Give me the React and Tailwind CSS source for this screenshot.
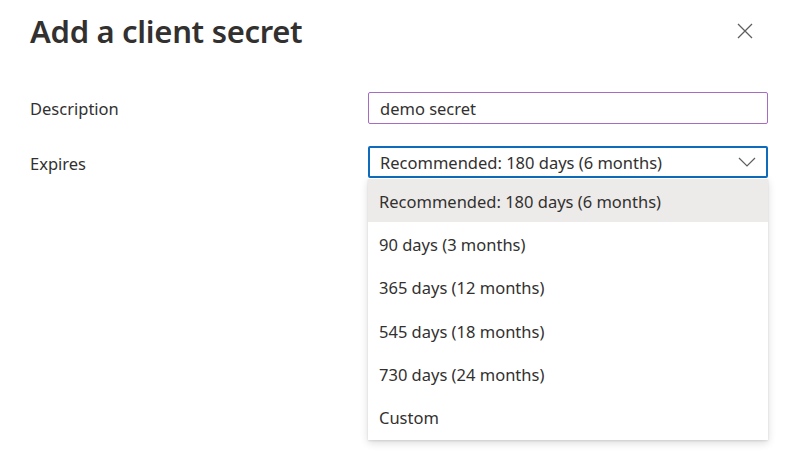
import React from 'react'

const options = [
  'Recommended: 180 days (6 months)',
  '90 days (3 months)',
  '365 days (12 months)',
  '545 days (18 months)',
  '730 days (24 months)',
  'Custom',
]

const App = () => {
  return (
    <div className="w-[801px] h-[469px] bg-white text-[#323130] font-['Noto_Sans',sans-serif] overflow-hidden">
      <div className="px-[30px] pt-[11px]">
        <div className="flex items-center justify-between">
          <h1 className="text-[31px] leading-[40px] font-semibold tracking-[-0.3px]">Add a client secret</h1>
          <button className="w-6 h-6 mr-[14px] flex items-center justify-center text-[#605e5c]">
            <svg width="16" height="16" viewBox="0 0 16 16" fill="none" stroke="currentColor" strokeWidth="1.3">
              <path d="M1 1 L15 15 M15 1 L1 15" />
            </svg>
          </button>
        </div>

        <div className="mt-[41px] flex items-center">
          <label className="w-[338px] text-[16.5px] pt-[3px]">Description</label>
          <div className="w-[400px] h-8 border border-[#a56cc1] rounded-[2px] px-[11px] pt-[3px] flex items-center text-[16.5px]">
            demo secret
          </div>
        </div>

        <div className="mt-[22px] flex items-start">
          <label className="w-[338px] text-[16.5px] leading-8 pt-[2px]">Expires</label>
          <div className="relative w-[400px]">
            <div className="h-8 border-2 border-[#0f6cbd] rounded-[2px] pl-[10px] pr-[10px] flex items-center justify-between text-[16.5px]">
              <span className="pt-[3px]">Recommended: 180 days (6 months)</span>
              <svg width="18" height="10" viewBox="0 0 18 10" fill="none" stroke="#605e5c" strokeWidth="1.2">
                <path d="M1 1 L9 9 L17 1" />
              </svg>
            </div>
            <ul className="absolute left-0 top-8 w-[400px] bg-white py-[1px] shadow-[0_3px_8px_rgba(0,0,0,0.14),0_1px_2px_rgba(0,0,0,0.1)]">
              {options.map((o, i) => (
                <li
                  key={o}
                  className={`h-[43.3px] flex items-center px-[11px] pt-[3px] text-[16.5px] ${i === 0 ? 'bg-[#edebe9]' : ''}`}
                >
                  {o}
                </li>
              ))}
            </ul>
          </div>
        </div>
      </div>
    </div>
  )
}

export default App
